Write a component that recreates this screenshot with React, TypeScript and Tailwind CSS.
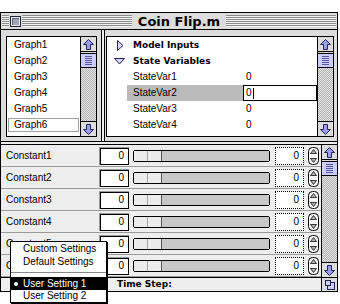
import React from "react";

const stripes =
  "bg-[repeating-linear-gradient(to_bottom,#8c8c8c_0px,#8c8c8c_1px,#f2f2f2_1px,#f2f2f2_2px)]";
const track =
  "bg-[repeating-conic-gradient(#b0b0b0_0%_25%,#e6e6e6_0%_50%)] bg-[length:2px_2px]";
const bold = "font-['DejaVu_Sans',sans-serif] font-bold";

function Arrow({ up }: { up: boolean }) {
  return (
    <div
      className={
        up
          ? "h-[15px] border-b border-black bg-[#dddddd] flex items-center justify-center"
          : "h-[15px] border-t border-black bg-[#dddddd] flex items-center justify-center"
      }
    >
      <svg width="13" height="13" viewBox="0 0 13 13">
        <path
          d={
            up
              ? "M6.5 1.5 L11.5 6.5 L8.5 6.5 L8.5 11.5 L4.5 11.5 L4.5 6.5 L1.5 6.5 Z"
              : "M6.5 11.5 L11.5 6.5 L8.5 6.5 L8.5 1.5 L4.5 1.5 L4.5 6.5 L1.5 6.5 Z"
          }
          fill="#9c9cf0"
          stroke="#222255"
        />
      </svg>
    </div>
  );
}

function Thumb() {
  return (
    <div className="mt-[1px] h-[15px] border-y border-black bg-[#ccccff] flex items-center justify-center">
      <div className="w-[7px] h-[9px] bg-[repeating-linear-gradient(to_bottom,#55559a_0px,#55559a_1px,#ccccff_1px,#ccccff_2px)]" />
    </div>
  );
}

function VScroll() {
  return (
    <div className="w-[16px] border-l border-black flex flex-col bg-[#dddddd]">
      <Arrow up />
      <Thumb />
      <div className={"flex-1 " + track} />
      <Arrow up={false} />
    </div>
  );
}

function Stepper() {
  return (
    <svg width="11" height="18" viewBox="0 0 11 18" className="block">
      <rect x="0.5" y="0.5" width="10" height="17" rx="4" fill="#f6f6f6" stroke="#000" />
      <path d="M5.5 2.5 L8.5 6.5 L2.5 6.5 Z" fill="#b4b4b4" stroke="#222" strokeWidth="0.9" />
      <path d="M5.5 15.5 L8.5 11.5 L2.5 11.5 Z" fill="#b4b4b4" stroke="#222" strokeWidth="0.9" />
    </svg>
  );
}

function ConstRow({ name }: { name: string }) {
  return (
    <div className="h-[22px] border-b border-[#9a9a9a] bg-[#eeeeee] flex items-center">
      <div className="w-[98px] pl-[5px]">{name}</div>
      <div className="w-[30px] h-[18px] border-t border-l border-[#9a9a9a]">
        <div className="w-[29px] h-[17px] border border-black bg-white flex items-center justify-end pr-[4px]">
          0
        </div>
      </div>
      <div className="ml-[4px] w-[137px] h-[12px] border border-black rounded-[2px] flex overflow-hidden">
        <div className="w-[14px] bg-[#ececec] border-r border-[#a8a8a8]" />
        <div className="w-[14px] bg-[#ececec] border-r border-[#555]" />
        <div className="flex-1 bg-[#c8c8c8]" />
      </div>
      <div className="ml-[5px] w-[29px] h-[18px] border border-dotted border-black bg-white flex items-center justify-end pr-[4px]">
        0
      </div>
      <div className="ml-[4px]">
        <Stepper />
      </div>
    </div>
  );
}

function StateRow({ name, active }: { name: string; active?: boolean }) {
  return (
    <div className="h-[16px] flex items-center pl-[20px]">
      <div
        className={
          active
            ? "w-[116px] h-full flex items-center pl-[6px] bg-[#bbbbbb]"
            : "w-[116px] h-full flex items-center pl-[6px]"
        }
      >
        {name}
      </div>
      {active ? (
        <div className="w-[74px] h-full border border-black bg-white flex items-center pl-[2px]">
          <span>0</span>
          <span className="w-[1px] h-[11px] bg-black ml-[1px]" />
        </div>
      ) : (
        <div className="w-[74px] h-full flex items-center pl-[3px]">0</div>
      )}
    </div>
  );
}

export default function App() {
  const graphs = ["Graph1", "Graph2", "Graph3", "Graph4", "Graph5", "Graph6"];
  return (
    <div className="w-[340px] h-[304px] bg-white relative overflow-hidden font-['Liberation_Sans',Arial,sans-serif] text-[10px] text-black leading-none">
      <div className="pt-[12px]">
        <div className="w-[338px] border border-black bg-[#dddddd] flex flex-col">
          {/* title bar */}
          <div className="h-[17px] border-b border-black flex items-center">
            <div className={"w-[7px] h-[12px] ml-[1px] " + stripes} />
            <div className="w-[11px] h-[11px] ml-[1px] border border-[#222233] bg-[#e8e8f4] flex items-center justify-center">
              <div className="w-[7px] h-[7px] bg-[#a4a4b0] border-t border-l border-[#666670]" />
            </div>
            <div className={"flex-1 h-[12px] ml-[1px] " + stripes} />
            <span className={"px-[6px] text-[13px] " + bold}>Coin Flip.m</span>
            <div className={"flex-1 h-[12px] mr-[1px] " + stripes} />
          </div>

          {/* top pane */}
          <div className="h-[111px] flex">
            <div className="w-[100px] pl-[5px] pt-[6px]">
              <div className="w-[91px] h-[101px] border border-black bg-white flex">
                <div className="flex-1 flex flex-col">
                  {graphs.map((g) => (
                    <div key={g} className="h-[16px] p-[1px]">
                      <div
                        className={
                          g === "Graph6"
                            ? "h-[14px] border border-[#a0a0a0] pl-[5px] flex items-center"
                            : "h-[14px] border border-transparent pl-[5px] flex items-center"
                        }
                      >
                        {g}
                      </div>
                    </div>
                  ))}
                </div>
                <VScroll />
              </div>
            </div>
            <div className="w-[4px] border-l border-r border-black bg-[#eeeeee]" />
            <div className="flex-1 pl-[1px] pt-[6px]">
              <div className="w-[228px] h-[101px] border border-black bg-white flex">
                <div className="flex-1 flex flex-col">
                  <div className="h-[16px] flex items-center">
                    <div className="w-[26px] pl-[10px] flex items-center">
                      <svg width="7" height="11" viewBox="0 0 7 11">
                        <path d="M0.5 0.5 L6 5.5 L0.5 10.5 Z" fill="#d8d8ff" stroke="#222255" />
                      </svg>
                    </div>
                    <span className={"text-[9px] " + bold}>Model Inputs</span>
                  </div>
                  <div className="h-[16px] flex items-center">
                    <div className="w-[26px] pl-[7px] flex items-center">
                      <svg width="11" height="7" viewBox="0 0 11 7">
                        <path d="M0.5 0.5 L10.5 0.5 L5.5 6 Z" fill="#d8d8ff" stroke="#222255" />
                      </svg>
                    </div>
                    <span className={"text-[9px] " + bold}>State Variables</span>
                  </div>
                  <StateRow name="StateVar1" />
                  <StateRow name="StateVar2" active />
                  <StateRow name="StateVar3" />
                  <StateRow name="StateVar4" />
                </div>
                <VScroll />
              </div>
            </div>
          </div>

          {/* splitter */}
          <div className="h-[4px] border-t border-b border-black bg-[#eeeeee]" />

          {/* constants pane */}
          <div className="flex">
            <div className="flex-1 flex flex-col">
              {["Constant1", "Constant2", "Constant3", "Constant4", "Constant5", "Constant6"].map(
                (c) => (
                  <ConstRow key={c} name={c} />
                )
              )}
            </div>
            <VScroll />
          </div>

          {/* status bar */}
          <div className="h-[14px] border-t border-black bg-[#eeeeee] flex">
            <div className="flex-1 flex items-center pl-[116px]">
              <span className={"text-[9px] " + bold}>Time Step:</span>
            </div>
            <div className="w-[16px] border-l border-black bg-[#dddddd] flex items-center justify-center">
              <svg width="12" height="12" viewBox="0 0 12 12">
                <rect x="3.5" y="3.5" width="7" height="7" fill="#ccccff" stroke="#222255" />
                <rect x="1.5" y="1.5" width="5" height="5" fill="#ccccff" stroke="#222255" />
              </svg>
            </div>
          </div>
        </div>
      </div>

      {/* popup menu */}
      <div className="absolute left-[10px] top-[241px] w-[97px] border border-black bg-white shadow-[1px_1px_0_0_#000] flex flex-col">
        <div className="h-[13px] flex items-center pl-[12px]">Custom Settings</div>
        <div className="h-[13px] flex items-center pl-[12px]">Default Settings</div>
        <div className="h-[9px] flex items-center">
          <div className="w-full h-[1px] bg-[#888888]" />
        </div>
        <div className="h-[13px] flex items-center bg-black text-white">
          <div className="w-[4px] h-[4px] rounded-full bg-white ml-[3px] mr-[5px]" />
          User Setting 1
        </div>
        <div className="h-[12px] flex items-center pl-[12px]">User Setting 2</div>
      </div>
    </div>
  );
}
